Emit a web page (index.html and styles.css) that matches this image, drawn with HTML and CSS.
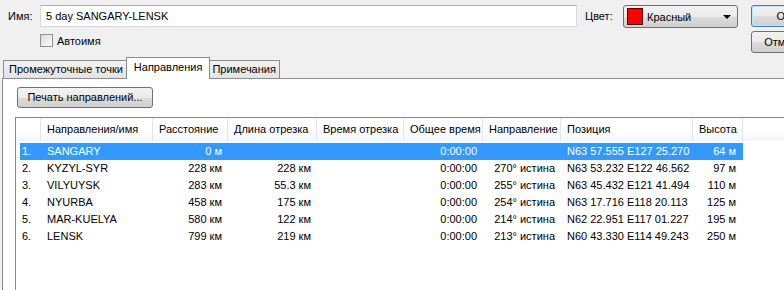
FILE: index.html
```html
<!DOCTYPE html>
<html lang="ru">
<head>
    <meta charset="UTF-8">
    <title>Маршрут</title>
    <link rel="stylesheet" href="styles.css">
</head>
<body>
    <div class="dialog">
        <div class="top">
            <div class="fields">
                <div class="name-row">
                    <label class="lbl-name">Имя:</label>
                    <div class="textbox">5 day SANGARY-LENSK</div>
                    <label class="lbl-color">Цвет:</label>
                    <div class="combo">
                        <span class="swatch"></span>
                        <span class="combo-text">Красный</span>
                        <span class="arrow"></span>
                    </div>
                </div>
                <div class="auto-row">
                    <span class="checkbox"></span>
                    <span>Автоимя</span>
                </div>
            </div>
            <div class="buttons">
                <div class="btn btn-default">ОК</div>
                <div class="btn">Отмена</div>
            </div>
        </div>

        <div class="tabs">
            <div class="tab">Промежуточные точки</div>
            <div class="tab active">Направления</div>
            <div class="tab narrow">Примечания</div>
        </div>

        <div class="pane">
            <div class="btn btn-print">Печать направлений...</div>

            <div class="listview">
                <div class="lv-header">
                    <span></span>
                    <span>Направления/имя</span>
                    <span>Расстояние</span>
                    <span>Длина отрезка</span>
                    <span>Время отрезка</span>
                    <span>Общее время</span>
                    <span>Направление</span>
                    <span>Позиция</span>
                    <span>Высота</span>
                    <span class="filler"></span>
                </div>
                <div class="lv-row selected">
                    <span>1.</span><span>SANGARY</span><span class="r">0 м</span><span class="r"></span><span class="r"></span><span class="r">0:00:00</span><span class="r"></span><span>N63 57.555 E127 25.270</span><span class="r">64 м</span>
                </div>
                <div class="lv-row">
                    <span>2.</span><span>KYZYL-SYR</span><span class="r">228 км</span><span class="r">228 км</span><span class="r"></span><span class="r">0:00:00</span><span class="r">270° истина</span><span>N63 53.232 E122 46.562</span><span class="r">97 м</span>
                </div>
                <div class="lv-row">
                    <span>3.</span><span>VILYUYSK</span><span class="r">283 км</span><span class="r">55.3 км</span><span class="r"></span><span class="r">0:00:00</span><span class="r">255° истина</span><span>N63 45.432 E121 41.494</span><span class="r">110 м</span>
                </div>
                <div class="lv-row">
                    <span>4.</span><span>NYURBA</span><span class="r">458 км</span><span class="r">175 км</span><span class="r"></span><span class="r">0:00:00</span><span class="r">254° истина</span><span>N63 17.716 E118 20.113</span><span class="r">125 м</span>
                </div>
                <div class="lv-row">
                    <span>5.</span><span>MAR-KUELYA</span><span class="r">580 км</span><span class="r">122 км</span><span class="r"></span><span class="r">0:00:00</span><span class="r">214° истина</span><span>N62 22.951 E117 01.227</span><span class="r">195 м</span>
                </div>
                <div class="lv-row">
                    <span>6.</span><span>LENSK</span><span class="r">799 км</span><span class="r">219 км</span><span class="r"></span><span class="r">0:00:00</span><span class="r">213° истина</span><span>N60 43.330 E114 49.243</span><span class="r">250 м</span>
                </div>
            </div>
        </div>
    </div>
</body>
</html>
```

FILE: styles.css
```css
body {
    margin: 0;
    width: 784px;
    height: 290px;
    overflow: hidden;
    background-color: #f0f0f0;
    font-family: "Liberation Sans", Arial, sans-serif;
    font-size: 11px;
    color: #000;
}

.dialog {
    width: 860px;
}

/* верхняя часть: имя, цвет, кнопки */
.top {
    display: flex;
    height: 57px;
}

.fields {
    padding-left: 8px;
}

.name-row {
    display: flex;
    align-items: center;
    padding-top: 4px;
}

.lbl-name {
    width: 32px;
}

.textbox {
    width: 537px;
    height: 22px;
    box-sizing: border-box;
    border: 1px solid #d6d9de;
    border-top-color: #abadb3;
    background-color: #fff;
    padding-left: 5px;
    line-height: 20px;
}

.lbl-color {
    width: 38px;
    margin-left: 8px;
}

.combo {
    width: 115px;
    height: 23px;
    box-sizing: border-box;
    border: 1px solid #707070;
    border-radius: 3px;
    background: linear-gradient(#f2f2f2 0%, #ebebeb 50%, #dddddd 51%, #cfcfcf 100%);
    display: flex;
    align-items: center;
    padding-left: 3px;
    margin-top: 1px;
}

.swatch {
    width: 14px;
    height: 15px;
    background-color: #ff0000;
    border: 1px solid #5a0000;
}

.combo-text {
    margin-left: 4px;
    flex-grow: 1;
}

.arrow {
    width: 0;
    height: 0;
    border-left: 4px solid transparent;
    border-right: 4px solid transparent;
    border-top: 4px solid #000;
    margin-right: 6px;
}

.auto-row {
    display: flex;
    align-items: center;
    margin-top: 6px;
    padding-left: 32px;
}

.checkbox {
    width: 13px;
    height: 13px;
    box-sizing: border-box;
    border: 1px solid #8e8f8f;
    background: linear-gradient(135deg, #dcdcdc, #fbfbfb);
    margin-right: 4px;
}

.buttons {
    margin-left: 13px;
    padding-top: 5px;
    display: flex;
    flex-direction: column;
    gap: 4px;
}

.btn {
    width: 66px;
    height: 22px;
    box-sizing: border-box;
    border: 1px solid #707070;
    border-radius: 3px;
    background: linear-gradient(#f2f2f2 0%, #ebebeb 50%, #dddddd 51%, #cfcfcf 100%);
    text-align: center;
    line-height: 20px;
}

.btn-default {
    border-color: #3c7fb1;
    box-shadow: inset 0 0 0 1px #bfe6f8;
}

/* вкладки */
.tabs {
    display: flex;
    align-items: flex-end;
    height: 21px;
    padding-left: 3px;
}

.tab {
    height: 17px;
    line-height: 17px;
    padding: 0 5px;
    border: 1px solid #898c95;
    border-bottom: none;
    margin-right: -1px;
    background: linear-gradient(#f3f3f3, #e3e3e3);
}

.tab.narrow {
    padding: 0 3px;
}

.tab.active {
    position: relative;
    height: 21px;
    line-height: 19px;
    padding: 0 7px;
    background-color: #fff;
    background-image: none;
    margin-bottom: -1px;
    margin-left: -2px;
    margin-right: -2px;
    z-index: 1;
}

.pane {
    margin-left: 2px;
    border-top: 1px solid #898c95;
    border-left: 1px solid #898c95;
    background-color: #fff;
    padding: 8px 0 0 14px;
    height: 300px;
}

.btn-print {
    width: 136px;
    height: 21px;
    line-height: 19px;
}

/* список направлений */
.listview {
    margin-top: 9px;
    margin-left: -2px;
    width: 820px;
    height: 260px;
    border: 1px solid #828790;
    background-color: #fff;
}

.lv-header {
    display: grid;
    grid-template-columns: 25px 112px 75px 89px 87px 79px 78px 132px 50px 1fr;
    height: 23px;
    background: linear-gradient(#ffffff 0%, #ffffff 60%, #f4f5f7 100%);
    margin-bottom: 2px;
}

.lv-header span {
    border-right: 1px solid #e3e5e8;
    padding-left: 6px;
    line-height: 23px;
    white-space: nowrap;
    overflow: hidden;
}

.lv-header .filler {
    border-right: none;
}

.lv-row {
    display: grid;
    grid-template-columns: 21px 112px 75px 89px 87px 79px 78px 132px 50px;
    width: fit-content;
    margin-left: 4px;
    height: 17px;
    line-height: 17px;
}

.lv-row span {
    padding-left: 6px;
    white-space: nowrap;
}

.lv-row span:first-child {
    padding-left: 2px;
}

.lv-row .r {
    text-align: right;
    padding-left: 0;
    padding-right: 6px;
}

.lv-row .r:last-child {
    padding-right: 7px;
}

.lv-row.selected {
    background-color: #3399ff;
    color: #fff;
}
```
